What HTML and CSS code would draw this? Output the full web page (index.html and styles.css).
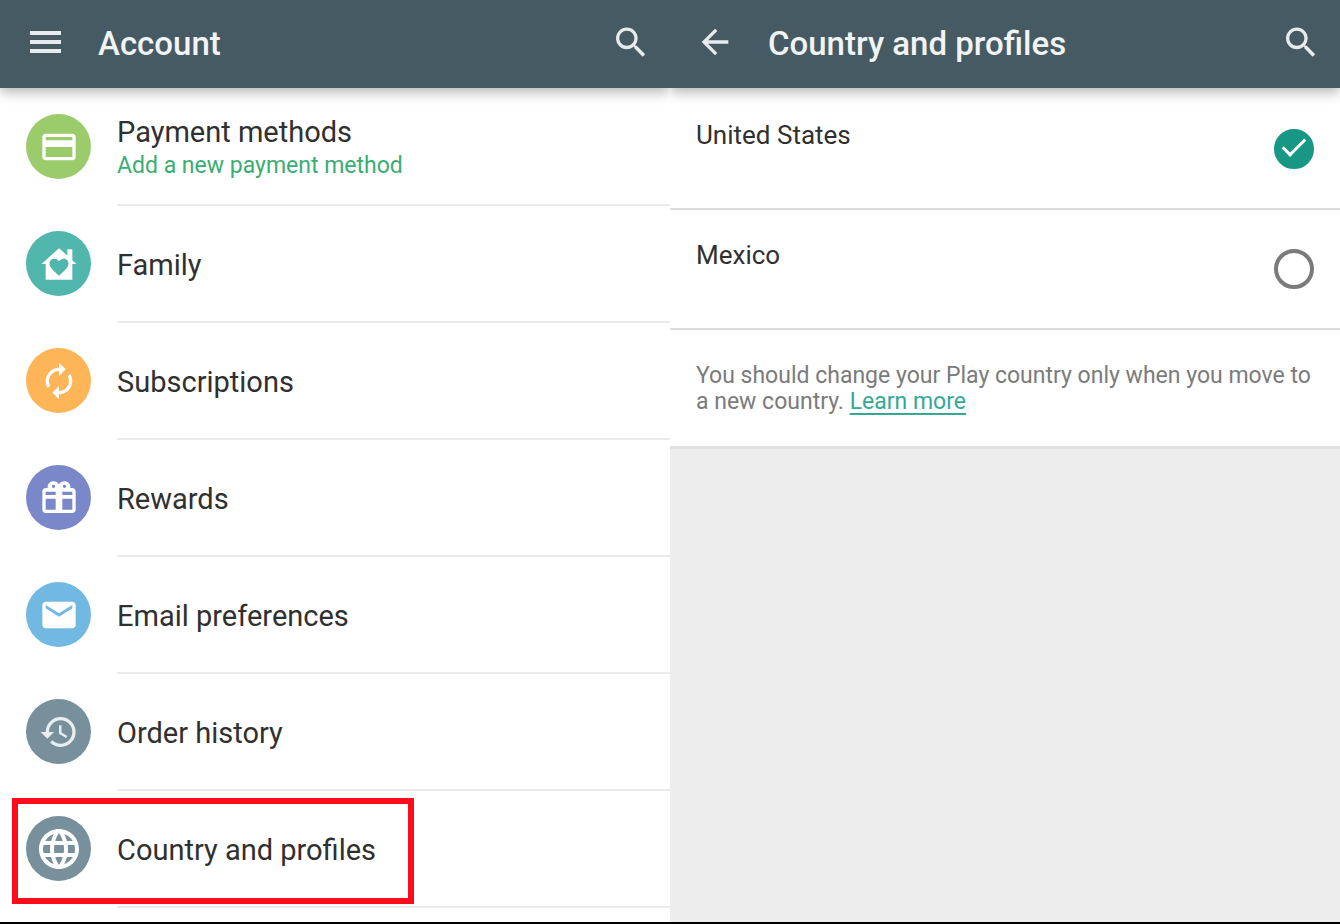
FILE: index.html
```
<!DOCTYPE html>
<html lang="en">
<head>
    <meta charset="UTF-8">
    <meta name="viewport" content="width=device-width, initial-scale=1.0">
    <title>Account</title>
    <link rel="stylesheet" href="styles.css">
</head>
<body>

<main>

    <!-- Account menu -->
    <section class="panel">
        <header>
            <button type="button" class="icon-button" aria-label="Menu">
                <svg viewBox="0 0 40 40"><path d="M4 7h31v4H4zM4 16h31v4H4zM4 25h31v4H4z"/></svg>
            </button>
            <h1>Account</h1>
            <button type="button" class="icon-button" aria-label="Search">
                <svg viewBox="0 0.9 24 24"><path d="M15.500 14h-.79l-.28-.27A6.471 6.471 0 0 0 16 9.500 6.500 6.500 0 1 0 9.500 16c1.610 0 3.090-.59 4.230-1.570l.27.28v.79l5 4.990L20.490 19l-4.990-5zm-6 0C7.010 14 5 11.990 5 9.500S7.010 5 9.500 5 14 7.010 14 9.500 11.990 14 9.500 14z"/></svg>
            </button>
        </header>

        <ul class="menu">
            <li>
                <a href="#payment">
                    <span class="circle green"><svg viewBox="0 0 24 24"><path d="M20 4H4c-1.110 0-1.990.89-1.990 2L2 18c0 1.110.89 2 2 2h16c1.110 0 2-.89 2-2V6c0-1.110-.89-2-2-2zm0 14H4v-6h16v6zm0-10H4V6h16v2z"/></svg></span>
                    <span class="text">Payment methods<small>Add a new payment method</small></span>
                </a>
            </li>
            <li>
                <a href="#family">
                    <span class="circle teal"><svg viewBox="0 0 24 24"><path fill-rule="evenodd" d="M12 2.500L1.500 12H4v9.500h16V12h2.500L20 9.700V3.200h-3v3.700zM12 19c-3.600-3.300-5.700-5-5.700-7.300 0-1.700 1.300-2.900 2.900-2.900 1.100 0 2.200.6 2.800 1.500.6-.9 1.700-1.500 2.800-1.500 1.600 0 2.900 1.200 2.900 2.900 0 2.300-2.100 4-5.700 7.300z"/></svg></span>
                    <span class="text">Family</span>
                </a>
            </li>
            <li>
                <a href="#subscriptions">
                    <span class="circle orange"><svg viewBox="0 0 24 24"><path d="M12 6v3l4-4-4-4v3c-4.420 0-8 3.580-8 8 0 1.570.46 3.030 1.240 4.260L6.700 14.800A5.870 5.870 0 0 1 6 12c0-3.310 2.690-6 6-6zm6.760 1.740L17.300 9.200c.44.84.7 1.790.7 2.800 0 3.310-2.690 6-6 6v-3l-4 4 4 4v-3c4.420 0 8-3.580 8-8 0-1.570-.46-3.030-1.240-4.260z"/></svg></span>
                    <span class="text">Subscriptions</span>
                </a>
            </li>
            <li>
                <a href="#rewards">
                    <span class="circle purple"><svg viewBox="0 0 24 24"><path fill-rule="evenodd" d="M4 6h1.200C4.900 3.800 6.500 2 8.700 2c1.400 0 2.600.7 3.300 1.700C12.700 2.700 13.900 2 15.300 2c2.200 0 3.800 1.800 3.500 4H20c1.100 0 2 .9 2 2v11c0 1.100-.9 2-2 2H4c-1.100 0-2-.9-2-2V8c0-1.100.9-2 2-2zM8.700 4a1 1 0 1 0 0 2 1 1 0 0 0 0-2zm6.600 0a1 1 0 1 0 0 2 1 1 0 0 0 0-2zM4 8.200v2h6v-2zm10 0v2h6v-2zM4 12.500V19h6v-6.500zm10 0V19h6v-6.500z"/></svg></span>
                    <span class="text">Rewards</span>
                </a>
            </li>
            <li>
                <a href="#email">
                    <span class="circle blue"><svg viewBox="0 0 24 24"><path d="M20 4H4c-1.100 0-1.990.9-1.990 2L2 18c0 1.100.9 2 2 2h16c1.100 0 2-.9 2-2V6c0-1.100-.9-2-2-2zm0 4l-8 5-8-5V6l8 5 8-5v2z"/></svg></span>
                    <span class="text">Email preferences</span>
                </a>
            </li>
            <li>
                <a href="#history">
                    <span class="circle gray"><svg viewBox="0 0 24 24"><path fill="#e8edef" d="M13 3a9 9 0 0 0-9 9H1l3.890 3.890.07.14L9 12H6c0-3.870 3.130-7 7-7s7 3.130 7 7-3.130 7-7 7c-1.930 0-3.680-.79-4.940-2.060l-1.420 1.420A8.954 8.954 0 0 0 13 21a9 9 0 0 0 0-18zm-1 5v5l4.280 2.540.72-1.210-3.500-2.080V8H12z"/></svg></span>
                    <span class="text">Order history</span>
                </a>
            </li>
            <li class="marked">
                <a href="#country">
                    <span class="circle gray"><svg class="globe" viewBox="0 0 24 24"><path d="M11.990 2C6.470 2 2 6.480 2 12s4.470 10 9.990 10C17.520 22 22 17.520 22 12S17.520 2 11.990 2zm6.930 6h-2.950a15.650 15.650 0 0 0-1.380-3.560A8.030 8.030 0 0 1 18.920 8zM12 4.040c.83 1.200 1.480 2.530 1.910 3.960h-3.820c.43-1.430 1.080-2.760 1.910-3.960zM4.260 14C4.100 13.360 4 12.690 4 12s.1-1.360.26-2h3.380c-.08.66-.14 1.320-.14 2s.06 1.340.14 2H4.260zm.82 2h2.950c.32 1.250.78 2.450 1.380 3.560A7.987 7.987 0 0 1 5.080 16zm2.950-8H5.080a7.987 7.987 0 0 1 4.330-3.560A15.650 15.650 0 0 0 8.030 8zM12 19.960c-.83-1.200-1.480-2.530-1.910-3.960h3.820c-.43 1.430-1.080 2.760-1.910 3.960zM14.340 14H9.660c-.09-.66-.16-1.320-.16-2s.07-1.350.16-2h4.680c.09.65.16 1.320.16 2s-.07 1.340-.16 2zm.25 5.560c.6-1.110 1.060-2.310 1.380-3.560h2.950a8.030 8.030 0 0 1-4.330 3.560zM16.360 14c.08-.66.14-1.320.14-2s-.06-1.340-.14-2h3.380c.16.64.26 1.310.26 2s-.1 1.360-.26 2h-3.380z"/></svg></span>
                    <span class="text">Country and profiles</span>
                </a>
            </li>
        </ul>
    </section>

    <!-- Country and profiles -->
    <section class="panel">
        <header>
            <button type="button" class="icon-button" aria-label="Back">
                <svg viewBox="0.6 1.200 24 24"><path d="M20 11H7.830l5.590-5.590L12 4l-8 8 8 8 1.410-1.410L7.830 13H20v-2z"/></svg>
            </button>
            <h1>Country and profiles</h1>
            <button type="button" class="icon-button" aria-label="Search">
                <svg viewBox="0 0.9 24 24"><path d="M15.500 14h-.79l-.28-.27A6.471 6.471 0 0 0 16 9.500 6.500 6.500 0 1 0 9.500 16c1.610 0 3.090-.59 4.230-1.570l.27.28v.79l5 4.990L20.490 19l-4.990-5zm-6 0C7.010 14 5 11.990 5 9.500S7.010 5 9.500 5 14 7.010 14 9.500 11.990 14 9.500 14z"/></svg>
            </button>
        </header>

        <div class="countries">
            <label class="country" for="us">
                <span>United States</span>
                <input type="radio" name="country" id="us" checked>
            </label>
            <label class="country" for="mx">
                <span>Mexico</span>
                <input type="radio" name="country" id="mx">
            </label>
            <p>You should change your Play country only when you move to a new country. <a href="#learn">Learn more</a></p>
        </div>
    </section>

</main>

</body>
</html>
```
FILE: styles.css
```
*,
*::after {
    box-sizing: border-box;
}

body {
    margin: 0;
    font-family: Roboto, Arial, sans-serif;
    color: #303030;
    background-color: #ededed;
}

main {
    display: grid;
    grid-template-columns: 1fr 1fr;
    min-height: 100vh;
    border-bottom: 2px solid black;
}

.panel {
    overflow: hidden;
}

header {
    position: relative;
    display: flex;
    align-items: center;
    height: 88px;
    padding: 0 19px 0 26px;
    background-color: #465a63;
    color: #f1f3f4;
    box-shadow: 0 4px 12px rgba(0, 0, 0, 0.3);
}

h1 {
    flex: 1;
    margin: 0 0 0 32px;
    font-size: 33px;
    font-weight: 500;
    line-height: 40px;
}

.icon-button {
    width: 40px;
    height: 40px;
    padding: 0;
    border: 0;
    background: none;
}

svg {
    display: block;
    width: 40px;
    height: 40px;
    fill: white;
}

header svg {
    fill: #e8ebed;
}

/* Left list */
.menu {
    height: 100%;
    margin: 0;
    padding: 1px 0 0 26px;
    list-style: none;
    background-color: white;
}

.menu li {
    position: relative;
}

.menu a {
    display: flex;
    gap: 26px;
    color: #303030;
    text-decoration: none;
}

.circle {
    display: flex;
    flex: none;
    align-items: center;
    justify-content: center;
    align-self: center;
    width: 65px;
    height: 65px;
    margin-bottom: 2px;
    border-radius: 50%;
}

.green { background-color: #9ccb6b; }
.teal { background-color: #51b6ac; }
.orange { background-color: #fdb557; }
.purple { background-color: #7a87c9; }
.blue { background-color: #71b9e3; }
.gray { background-color: #78909c; }

.globe {
    width: 48px;
    height: 48px;
}

.text {
    display: flex;
    flex: 1;
    flex-direction: column;
    justify-content: center;
    height: 117px;
    padding-top: 3px;
    border-bottom: 2px solid #ebebeb;
    font-size: 29px;
    line-height: 36px;
}

.text small {
    color: #3aad73;
    font-size: 23px;
    line-height: 32px;
}

/* Red frame round the marked row */
.marked::after {
    content: "";
    position: absolute;
    top: 7px;
    bottom: 4px;
    left: -14px;
    width: 402px;
    border: 6px solid #fd0d1b;
    pointer-events: none;
}

/* Right list */
.countries {
    padding-top: 2px;
    background-color: white;
    border-bottom: 3px solid #e2e2e2;
}

.country {
    display: flex;
    align-items: center;
    justify-content: space-between;
    height: 120px;
    padding: 0 26px;
    border-bottom: 2px solid #dcdcdc;
    font-size: 26px;
    line-height: 30px;
}

.country span {
    padding-bottom: 28px;
}

.country input {
    appearance: none;
    width: 40px;
    height: 40px;
    margin: 0;
    border: 4px solid #7b7b7b;
    border-radius: 50%;
}

.country input:checked {
    display: flex;
    justify-content: center;
    border-color: #189785;
    background-color: #189785;
}

.country input:checked::after {
    content: "";
    width: 12px;
    height: 23px;
    border: solid white;
    border-width: 0 3px 3px 0;
    transform: rotate(45deg);
}

.countries p {
    margin: 0;
    padding: 33px 26px 31px;
    color: #7b7b7b;
    font-size: 23px;
    line-height: 26px;
}

.countries p a {
    color: #35a898;
    text-underline-offset: 4px;
}
```
